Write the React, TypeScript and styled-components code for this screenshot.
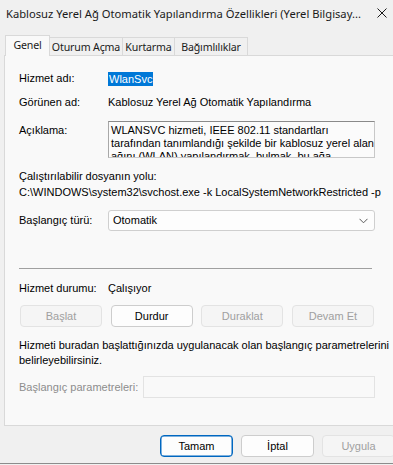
import React from "react";
import styled, { createGlobalStyle } from "styled-components";

const GlobalStyle = createGlobalStyle`
  html, body {
    margin: 0;
    padding: 0;
    background: #f0f0f0;
  }
`;

const uiFont = `"Noto Sans", "Open Sans", sans-serif`;

const Window = styled.div`
  width: 393px;
  height: 463px;
  background: #f0f0f0;
  border-bottom: 1px solid #8c8c8c;
  overflow: hidden;
  display: flex;
  flex-direction: column;
  font-family: "Liberation Sans", Arial, sans-serif;
  font-size: 11px;
  color: #000;
`;

const TitleBar = styled.div`
  height: 27px;
  flex: none;
  display: flex;
  align-items: center;
  justify-content: space-between;
  padding: 0 0 0 6px;
  font-family: ${uiFont};
  font-size: 11.2px;
  color: #1a1a1a;
`;

const Title = styled.div`
  white-space: nowrap;
  margin-top: -1px;
`;

const CloseButton = styled.div`
  width: 22px;
  height: 27px;
  display: flex;
  align-items: center;
  justify-content: center;
  margin-top: -1px;
`;

const TabStrip = styled.div`
  height: 28px;
  flex: none;
  display: flex;
  align-items: flex-end;
  padding-left: 5px;
  position: relative;
  z-index: 1;
`;

const Tab = styled.div<{ $w: number; $active?: boolean }>`
  width: ${(p) => p.$w}px;
  height: ${(p) => (p.$active ? 21 : 18)}px;
  margin-bottom: ${(p) => (p.$active ? -1 : 0)}px;
  box-sizing: border-box;
  border: 1px solid #d9d9d9;
  border-bottom: none;
  margin-right: -1px;
  background: ${(p) => (p.$active ? "#f9f9f9" : "#f0f0f0")};
  display: flex;
  align-items: center;
  justify-content: center;
  white-space: nowrap;
  font-family: ${uiFont};
  font-size: 10.6px;
  letter-spacing: -0.15px;
  color: #1a1a1a;
  padding-bottom: ${(p) => (p.$active ? 2 : 0)}px;
`;

const Panel = styled.div`
  margin-left: 4px;
  width: 400px;
  height: 371px;
  box-sizing: border-box;
  flex: none;
  border: 1px solid #d9d9d9;
  background: #f9f9f9;
  padding: 0 0 0 14px;
`;

const Row = styled.div<{ $mt: number }>`
  display: flex;
  align-items: center;
  margin-top: ${(p) => p.$mt}px;
  min-height: 15px;
  line-height: 15px;
  white-space: nowrap;
`;

const Label = styled.div<{ $w?: number; $disabled?: boolean; $pt?: number }>`
  width: ${(p) => p.$w ?? 89}px;
  flex: none;
  padding-top: ${(p) => p.$pt ?? 0}px;
  color: ${(p) => (p.$disabled ? "#8d8d8d" : "#000")};
`;

const Selected = styled.span`
  background: #0078d7;
  color: #fff;
  padding: 0 1px;
  line-height: 14px;
`;

const TopRow = styled.div<{ $mt: number }>`
  display: flex;
  align-items: flex-start;
  margin-top: ${(p) => p.$mt}px;
`;

const DescBox = styled.div`
  width: 267px;
  height: 37px;
  box-sizing: border-box;
  border: 1px solid #c8c8c8;
  border-top-color: #8a8a8a;
  border-left-color: #a8a8a8;
  background: #fbfbfb;
  display: flex;
  overflow: hidden;
`;

const DescText = styled.div`
  flex: 1;
  padding: 2px 0 0 2px;
  line-height: 13px;
  white-space: nowrap;
`;

const ScrollTrack = styled.div`
  width: 17px;
  flex: none;
  background: #f0f0f0;
`;

const Select = styled.div`
  width: 267px;
  height: 21px;
  box-sizing: border-box;
  border: 1px solid #cfcfcf;
  border-radius: 3px;
  background: #fdfdfd;
  display: flex;
  align-items: center;
  justify-content: space-between;
  padding: 0 6px 0 4px;
`;

const Separator = styled.div`
  margin-top: 37px;
  width: 353px;
  height: 1px;
  background: #a0a0a0;
`;

const ButtonRow = styled.div`
  margin-top: 9px;
  margin-left: 1px;
  width: 354px;
  display: flex;
  justify-content: space-between;
`;

const Button = styled.div<{ $w?: number; $disabled?: boolean; $default?: boolean }>`
  width: ${(p) => p.$w ?? 82}px;
  height: 22px;
  box-sizing: border-box;
  flex: none;
  border-radius: 4px;
  border: 1px solid
    ${(p) => (p.$default ? "#0067c0" : p.$disabled ? "#e3e3e3" : "#cdcdcd")};
  box-shadow: ${(p) => (p.$default ? "inset 0 0 0 0.5px #0067c0" : "none")};
  background: ${(p) => (p.$disabled ? "#f5f5f5" : "#fdfdfd")};
  color: ${(p) => (p.$disabled ? "#a0a0a0" : "#000")};
  display: flex;
  align-items: center;
  justify-content: center;
`;

const Paragraph = styled.div`
  margin-top: 11px;
  line-height: 15px;
  white-space: nowrap;
`;

const ParamInput = styled.div`
  width: 232px;
  height: 22px;
  box-sizing: border-box;
  border: 1px solid #e3e3e3;
  background: #f9f9f9;
`;

const Footer = styled.div`
  display: flex;
  gap: 8px;
  padding: 9px 0 0 160px;
`;

const Chevron = () => (
  <svg width="9" height="6" viewBox="0 0 9 6">
    <path d="M0.5 0.8 L4.5 4.8 L8.5 0.8" fill="none" stroke="#5a5a5a" strokeWidth="1" />
  </svg>
);

const CloseIcon = () => (
  <svg width="10" height="10" viewBox="0 0 10 10">
    <path d="M0.5 0.5 L9.5 9.5 M9.5 0.5 L0.5 9.5" stroke="#1a1a1a" strokeWidth="1" />
  </svg>
);

export default function App() {
  return (
    <>
      <GlobalStyle />
      <Window>
        <TitleBar>
          <Title>
            Kablosuz Yerel Ağ Otomatik Yapılandırma Özellikleri (Yerel Bilgisay...
          </Title>
          <CloseButton>
            <CloseIcon />
          </CloseButton>
        </TitleBar>
        <TabStrip>
          <Tab $w={45} $active>
            Genel
          </Tab>
          <Tab $w={74}>Oturum Açma</Tab>
          <Tab $w={53}>Kurtarma</Tab>
          <Tab $w={74}>Bağımlılıklar</Tab>
        </TabStrip>
        <Panel>
          <Row $mt={15}>
            <Label>Hizmet adı:</Label>
            <Selected>WlanSvc</Selected>
          </Row>
          <Row $mt={9}>
            <Label>Görünen ad:</Label>
            <span>Kablosuz Yerel Ağ Otomatik Yapılandırma</span>
          </Row>
          <TopRow $mt={11}>
            <Label $pt={3}>Açıklama:</Label>
            <DescBox>
              <DescText>
                WLANSVC hizmeti, IEEE 802.11 standartları
                <br />
                tarafından tanımlandığı şekilde bir kablosuz yerel alan
                <br />
                ağını (WLAN) yapılandırmak, bulmak, bu ağa
              </DescText>
              <ScrollTrack />
            </DescBox>
          </TopRow>
          <Row $mt={11}>Çalıştırılabilir dosyanın yolu:</Row>
          <Row $mt={1}>
            C:\WINDOWS\system32\svchost.exe -k LocalSystemNetworkRestricted -p
          </Row>
          <Row $mt={10}>
            <Label>Başlangıç türü:</Label>
            <Select>
              <span>Otomatik</span>
              <Chevron />
            </Select>
          </Row>
          <Separator />
          <Row $mt={12}>
            <Label>Hizmet durumu:</Label>
            <span>Çalışıyor</span>
          </Row>
          <ButtonRow>
            <Button $disabled>Başlat</Button>
            <Button>Durdur</Button>
            <Button $disabled>Duraklat</Button>
            <Button $disabled>Devam Et</Button>
          </ButtonRow>
          <Paragraph>
            Hizmeti buradan başlattığınızda uygulanacak olan başlangıç parametrelerini
            <br />
            belirleyebilirsiniz.
          </Paragraph>
          <Row $mt={8}>
            <Label $w={124} $disabled>
              Başlangıç parametreleri:
            </Label>
            <ParamInput />
          </Row>
        </Panel>
        <Footer>
          <Button $w={73} $default>
            Tamam
          </Button>
          <Button $w={73}>İptal</Button>
          <Button $w={73} $disabled>
            Uygula
          </Button>
        </Footer>
      </Window>
    </>
  );
}
